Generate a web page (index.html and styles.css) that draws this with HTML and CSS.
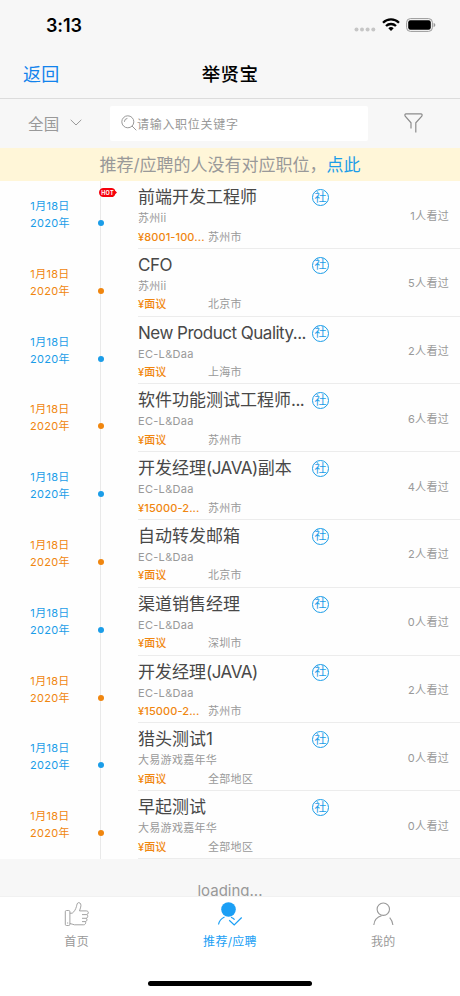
FILE: index.html
```html
<!DOCTYPE html>
<html lang="zh-CN">
<head>
    <meta charset="UTF-8">
    <meta name="viewport" content="width=device-width, initial-scale=1.0">
    <title>举贤宝</title>
    <link rel="stylesheet" href="styles.css">
</head>
<body>
    <header class="header">
        <div class="status-bar">
            <span class="time">3:13</span>
            <div class="status-icons">
                <svg class="signal" width="22" height="5" viewBox="0 0 22 5" fill="#c6c6c6">
                    <circle cx="2.5" cy="2.5" r="2"/><circle cx="8" cy="2.5" r="2"/><circle cx="13.6" cy="2.5" r="2"/><circle cx="19.3" cy="2.5" r="2"/>
                </svg>
                <svg class="wifi" width="18" height="13" viewBox="0 0 18 13" fill="none" stroke="#000" stroke-width="2.3">
                    <path d="M1 4.7a11.4 11.4 0 0 1 16 0"/>
                    <path d="M4 8a7.2 7.2 0 0 1 10 0"/>
                    <path d="M6.3 10.2a3.9 3.9 0 0 1 5.4 0L9 13z" fill="#000" stroke="none"/>
                </svg>
                <svg class="battery" width="30" height="14" viewBox="0 0 30 14">
                    <rect x=".6" y=".6" width="25.8" height="12.8" rx="3.8" fill="none" stroke="#999"/>
                    <rect x="2.2" y="2.2" width="22.6" height="9.6" rx="2.2"/>
                    <path d="M27.6 4.8q1.8.7 1.8 2.2t-1.8 2.2z" fill="#999"/>
                </svg>
            </div>
        </div>
        <nav class="navbar">
            <a class="back" href="#">返回</a>
            <h1>举贤宝</h1>
        </nav>
    </header>

    <div class="search-bar">
        <div class="region">
            全国
            <svg width="12" height="7" viewBox="0 0 12 7" fill="none" stroke="#999"><path d="M.7.8 6 6 11.3.8"/></svg>
        </div>
        <div class="search-input">
            <svg width="16" height="16" viewBox="0 0 16 16" fill="none" stroke="#999">
                <circle cx="6.8" cy="6.8" r="6"/><path d="m11 11 4.3 4.3M3.4 6.8a3.4 3.4 0 0 1 3-3.4"/>
            </svg>
            <span>请输入职位关键字</span>
        </div>
        <svg class="filter" width="19" height="20" viewBox="0 0 19 20" fill="none" stroke="#8c8c8c" stroke-width="1.2">
            <path d="M7 15.5V9.8L1.2 3.2Q.2 1 2.2.9h14.6q2 .1 1 2.3l-6 6.6v9.6"/>
        </svg>
    </div>

    <div class="notice">推荐/应聘的人没有对应职位，<a href="#">点此</a></div>

    <main class="content">
        <ul class="job-list">
            <li class="job">
                <div class="date">1月18日<br>2020年</div>
                <div class="line">
                    <svg class="hot" width="18" height="9" viewBox="0 0 18 9">
                        <path d="M4.5 0h8q3 0 3.700 2.800L18 4.500l-1.800 1.700Q15.500 9 12.500 9h-8a4.500 4.500 0 0 1 0-9z" fill="#f5000b"/>
                        <text x="8.500" y="6.500" text-anchor="middle">HOT</text>
                    </svg>
                </div>
                <div class="info">
                    <h2>前端开发工程师</h2><i class="tag">社</i>
                    <p class="company">苏州ii</p>
                    <p class="meta"><b>¥8001-100...</b><span>苏州市</span></p>
                    <span class="views">1人看过</span>
                </div>
            </li>
            <li class="job orange">
                <div class="date">1月18日<br>2020年</div>
                <div class="line"></div>
                <div class="info">
                    <h2><span class="en">CFO</span></h2><i class="tag">社</i>
                    <p class="company">苏州ii</p>
                    <p class="meta"><b>¥面议</b><span>北京市</span></p>
                    <span class="views">5人看过</span>
                </div>
            </li>
            <li class="job">
                <div class="date">1月18日<br>2020年</div>
                <div class="line"></div>
                <div class="info">
                    <h2><span class="en">New Product Quality...</span></h2><i class="tag">社</i>
                    <p class="company">EC-L&amp;Daa</p>
                    <p class="meta"><b>¥面议</b><span>上海市</span></p>
                    <span class="views">2人看过</span>
                </div>
            </li>
            <li class="job orange">
                <div class="date">1月18日<br>2020年</div>
                <div class="line"></div>
                <div class="info">
                    <h2>软件功能测试工程师<span class="en">...</span></h2><i class="tag">社</i>
                    <p class="company">EC-L&amp;Daa</p>
                    <p class="meta"><b>¥面议</b><span>苏州市</span></p>
                    <span class="views">6人看过</span>
                </div>
            </li>
            <li class="job">
                <div class="date">1月18日<br>2020年</div>
                <div class="line"></div>
                <div class="info">
                    <h2>开发经理<span class="en">(JAVA)</span>副本</h2><i class="tag">社</i>
                    <p class="company">EC-L&amp;Daa</p>
                    <p class="meta"><b>¥15000-2...</b><span>苏州市</span></p>
                    <span class="views">4人看过</span>
                </div>
            </li>
            <li class="job orange">
                <div class="date">1月18日<br>2020年</div>
                <div class="line"></div>
                <div class="info">
                    <h2>自动转发邮箱</h2><i class="tag">社</i>
                    <p class="company">EC-L&amp;Daa</p>
                    <p class="meta"><b>¥面议</b><span>北京市</span></p>
                    <span class="views">2人看过</span>
                </div>
            </li>
            <li class="job">
                <div class="date">1月18日<br>2020年</div>
                <div class="line"></div>
                <div class="info">
                    <h2>渠道销售经理</h2><i class="tag">社</i>
                    <p class="company">EC-L&amp;Daa</p>
                    <p class="meta"><b>¥面议</b><span>深圳市</span></p>
                    <span class="views">0人看过</span>
                </div>
            </li>
            <li class="job orange">
                <div class="date">1月18日<br>2020年</div>
                <div class="line"></div>
                <div class="info">
                    <h2>开发经理<span class="en">(JAVA)</span></h2><i class="tag">社</i>
                    <p class="company">EC-L&amp;Daa</p>
                    <p class="meta"><b>¥15000-2...</b><span>苏州市</span></p>
                    <span class="views">2人看过</span>
                </div>
            </li>
            <li class="job">
                <div class="date">1月18日<br>2020年</div>
                <div class="line"></div>
                <div class="info">
                    <h2>猎头测试1</h2><i class="tag">社</i>
                    <p class="company">大易游戏嘉年华</p>
                    <p class="meta"><b>¥面议</b><span>全部地区</span></p>
                    <span class="views">0人看过</span>
                </div>
            </li>
            <li class="job orange">
                <div class="date">1月18日<br>2020年</div>
                <div class="line"></div>
                <div class="info">
                    <h2>早起测试</h2><i class="tag">社</i>
                    <p class="company">大易游戏嘉年华</p>
                    <p class="meta"><b>¥面议</b><span>全部地区</span></p>
                    <span class="views">0人看过</span>
                </div>
            </li>
        </ul>
        <div class="loading">loading...</div>
    </main>

    <footer class="footer">
        <div class="tabs">
            <a class="tab" href="#">
                <svg width="26" height="26" viewBox="0 0 26 26" fill="none" stroke="#999" stroke-width=".9">
                    <rect x="1.3" y="9.5" width="4.6" height="15" rx="1.2"/>
                    <path d="M5.9 12.2h2.3c2.4-1.7 3.4-4 4.2-6.5.5-2 .7-4 2.3-4.1 2 0 2.6 2.4 2 4.500l-1.200 3.800h6.700c1.600 0 2.200.8 2.100 1.900-.1 1-.7 1.600-1.600 1.800.9.5 1.200 1.200 1 2.100-.1.9-.7 1.400-1.500 1.600.7.5.9 1.100.7 1.900-.2.9-.8 1.300-1.600 1.400.4.500.5 1 .3 1.700-.3 1.100-1.100 1.500-2.200 1.500H10.500c-2 0-2.700-1.300-4.600-1.300M18 13.600h4.700M18 17.300h4.200M18 20.600h3.300M3 22h1.200"/>
                </svg>
                <span>首页</span>
            </a>
            <a class="tab active" href="#">
                <svg width="26" height="26" viewBox="0 0 26 26" fill="none" stroke="#1b9ff5" stroke-width="1.2">
                    <circle cx="11.500" cy="8.500" r="7.300" fill="#1b9ff5" stroke="none"/>
                    <path d="M1.500 23.500c.7-3.600 2.700-6 6-7.500M14 16.200c1.500.6 2.700 1.500 3.600 2.500M12.200 19.300l5 4.700 7.500-7.500"/>
                </svg>
                <span>推荐/应聘</span>
            </a>
            <a class="tab" href="#">
                <svg width="26" height="26" viewBox="0 0 26 26" fill="none" stroke="#999" stroke-width="1.1">
                    <circle cx="13.3" cy="8.2" r="6.2"/>
                    <path d="M3.8 24c.5-4.500 3.300-8 7.800-9.200M19.700 16.700c1.700 2 2.900 4.300 3.200 7.300"/>
                </svg>
                <span>我的</span>
            </a>
        </div>
        <div class="home-bar"></div>
    </footer>
</body>
</html>
```
FILE: styles.css
```css
* {
    box-sizing: border-box;
}
body {
    margin: 0;
    height: 996px;
    display: flex;
    flex-direction: column;
    overflow: hidden;
    font-family: Inter, 'Noto Sans CJK SC', sans-serif;
    font-size: 11px;
    letter-spacing: 0.3px;
    background-color: #f7f7f7;
    color: #999;
}
a {
    text-decoration: none;
    color: inherit;
}
.header {
    flex: none;
    height: 99px;
    border-bottom: 1px solid #dcdcdc;
}
.status-bar {
    display: flex;
    justify-content: space-between;
    height: 50px;
    padding: 15px 24px 0 46px;
}
.time {
    font-size: 18px;
    line-height: 22px;
    font-weight: 600;
    letter-spacing: -0.1px;
    color: #000;
}
.status-icons {
    display: flex;
    align-items: flex-start;
    padding-top: 3px;
}
.signal {
    margin: 9px 6px 0 0;
}
.wifi {
    margin-right: 6px;
}
.navbar {
    display: grid;
    grid-template-columns: 1fr auto 1fr;
    align-items: center;
    height: 46px;
    padding: 0 23px;
}
.back {
    font-size: 18px;
    color: #1283ed;
}
.navbar h1 {
    margin: 0;
    font-size: 18.5px;
    font-weight: 500;
    color: #000;
}
.search-bar {
    flex: none;
    display: flex;
    align-items: center;
    height: 49px;
    padding: 0 37px 0 28px;
}
.region {
    display: flex;
    align-items: center;
    gap: 10px;
    width: 82px;
    padding-bottom: 2px;
    font-size: 15.5px;
}
.search-input {
    display: flex;
    align-items: center;
    width: 258px;
    height: 35px;
    padding: 0 0 1px 11px;
    background: #fff;
    border-radius: 2px;
    font-size: 12px;
    letter-spacing: 0.7px;
}
.filter {
    margin: 0 0 2px auto;
}
.notice {
    flex: none;
    height: 33px;
    line-height: 34px;
    background: #fff6d8;
    text-align: center;
    font-size: 17px;
    letter-spacing: 0;
}
.notice a {
    color: #1b9de8;
}
.content {
    flex: 1;
    min-height: 0;
    overflow: hidden;
}
.job-list {
    margin: 0;
    padding: 0;
    list-style: none;
    background: #fefefe;
}
.job {
    display: flex;
    height: 67.8px;
    color: #1b9de8;
}
.job.orange {
    color: #f0860f;
}
.date {
    width: 100px;
    padding-top: 17px;
    line-height: 17px;
    text-align: center;
}
.line {
    position: relative;
    width: 1px;
    background: #e9e9e9;
}
.line::after {
    content: '';
    position: absolute;
    left: -2px;
    top: 39px;
    width: 6px;
    height: 6px;
    border-radius: 50%;
    background: currentColor;
}
.hot {
    position: absolute;
    left: -1px;
    top: 7px;
}
.hot text {
    font-size: 5.5px;
    font-weight: 700;
    fill: #fff;
}
.info {
    display: grid;
    grid-template-columns: 174px 1fr auto;
    grid-template-rows: 27px 14px 23px;
    align-items: center;
    flex: 1;
    margin-left: 37px;
    padding: 3px 11px 0 0;
    border-bottom: 1px solid #ececec;
    color: #999;
}
.info h2 {
    margin: 0;
    font-size: 17px;
    line-height: 27px;
    font-weight: 400;
    letter-spacing: 0;
    color: #484848;
    white-space: nowrap;
}
.info .en {
    letter-spacing: -0.5px;
}
.tag {
    display: flex;
    align-items: center;
    justify-content: center;
    width: 17px;
    height: 17px;
    border: 1px solid #1b9de8;
    border-radius: 50%;
    font-size: 12px;
    line-height: 12px;
    font-style: normal;
    letter-spacing: 0;
    color: #1b9de8;
}
.company, .meta {
    grid-column: 1;
    margin: 0;
    line-height: 16px;
    white-space: nowrap;
}
.meta {
    display: flex;
}
.meta b {
    width: 70px;
    font-weight: 500;
    letter-spacing: 0.1px;
    color: #f0860f;
}
.views {
    grid-column: 3;
    grid-row: 1 / 4;
    padding-bottom: 3px;
}
.loading {
    padding-top: 20px;
    text-align: center;
    font-size: 15px;
    line-height: 24px;
    letter-spacing: 0;
}
.footer {
    flex: none;
    height: 100px;
    background: #fff;
    border-top: 1px solid #f1f1f1;
}
.tabs {
    display: grid;
    grid-template-columns: repeat(3, 1fr);
    height: 87px;
}
.tab {
    display: flex;
    flex-direction: column;
    align-items: center;
    padding-top: 4px;
    font-size: 12px;
    line-height: 18px;
}
.tab span {
    margin-top: 6px;
}
.tab.active {
    color: #1b9ff5;
}
.home-bar {
    width: 164px;
    height: 5px;
    margin: -3px auto 0;
    border-radius: 3px;
    background: #000;
}
```
